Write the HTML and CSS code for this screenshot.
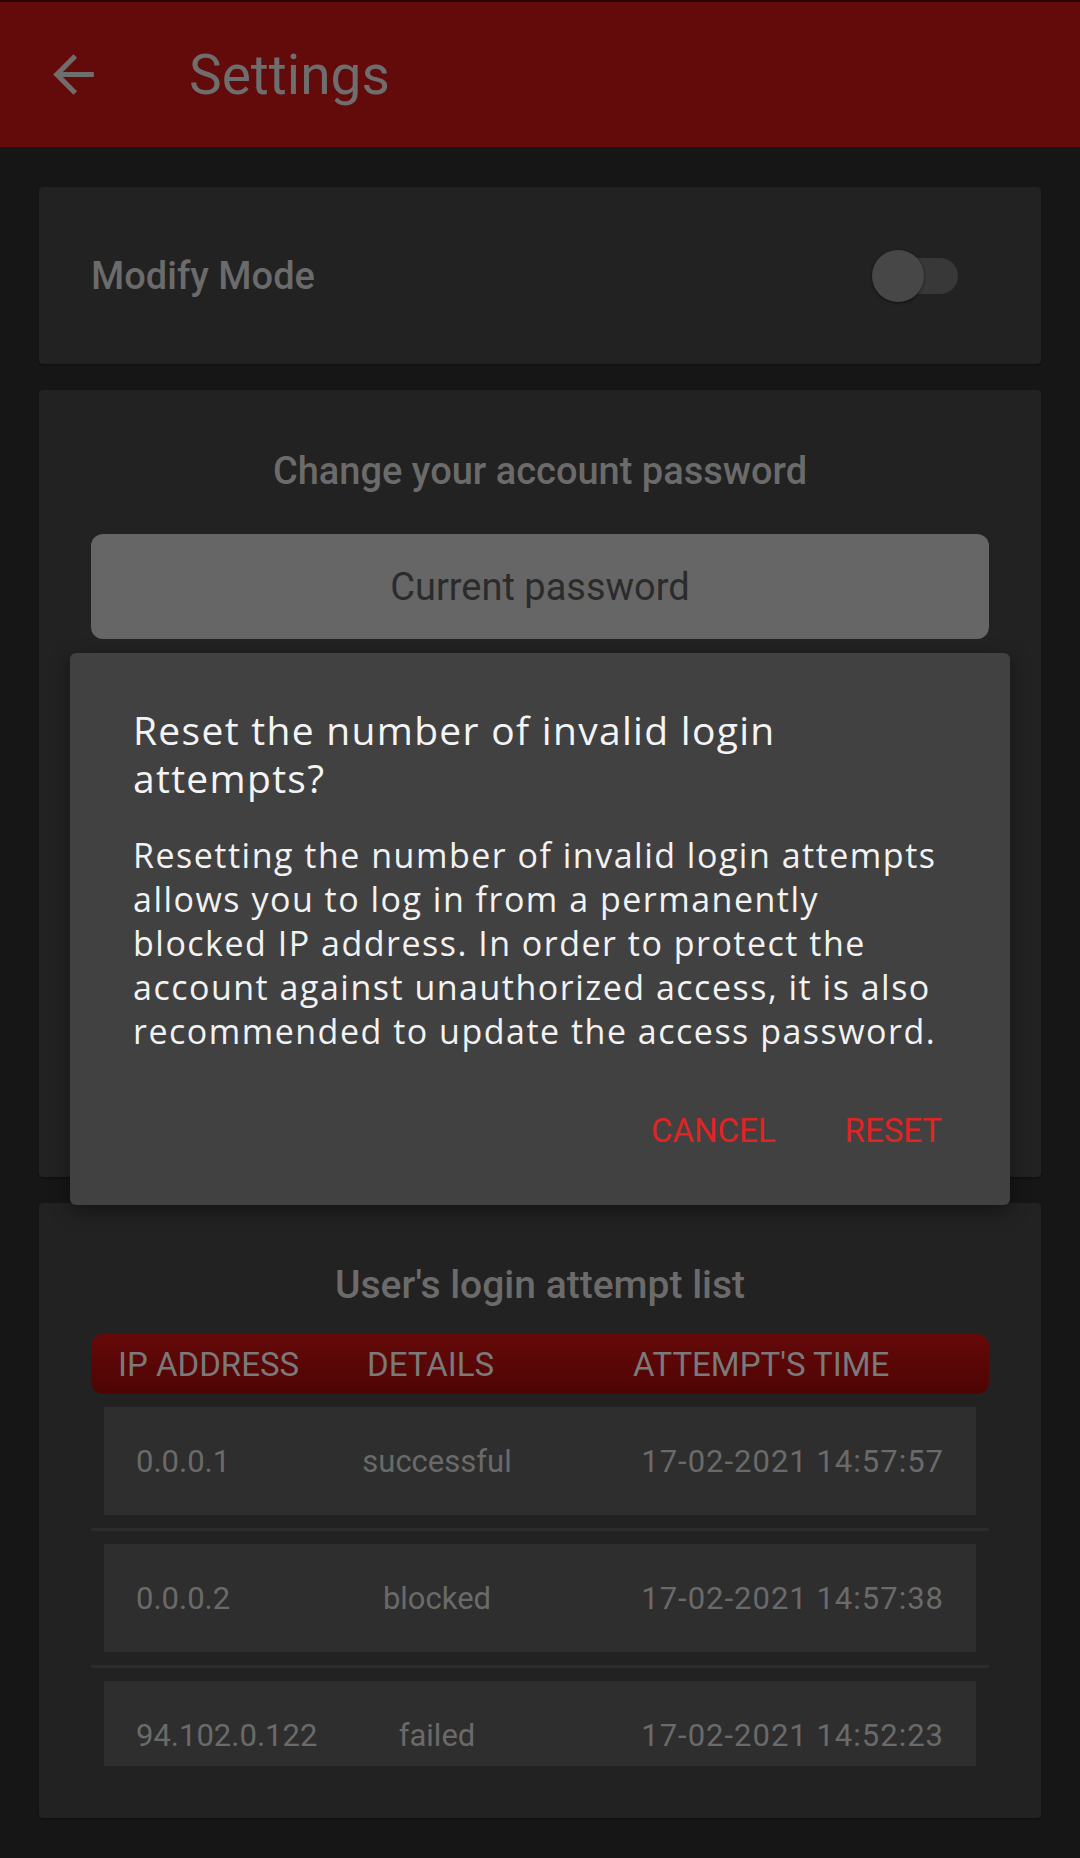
FILE: index.html
```html
<!DOCTYPE html>
<html lang="en">
<head>
<meta charset="utf-8">
<title>Settings</title>
<link rel="stylesheet" href="styles.css">
</head>
<body>
<header class="appbar">
  <svg class="back" viewBox="0 0 24 24" width="61" height="61" aria-hidden="true"><path d="M20 11H7.83l5.59-5.59L12 4l-8 8 8 8 1.41-1.41L7.83 13H20v-2z" fill="#6e6e6e"/></svg>
  <h1 class="title">Settings</h1>
</header>
<main class="content">
  <section class="card card-mode">
    <span class="mode-label">Modify Mode</span>
    <span class="switch"><span class="switch-track"></span><span class="switch-thumb"></span></span>
  </section>
  <section class="card card-password">
    <h2 class="card-title">Change your account password</h2>
    <div class="field">Current password</div>
  </section>
  <section class="card card-attempts">
    <h2 class="card-title list-title">User's login attempt list</h2>
    <div class="table-head">
      <span>IP ADDRESS</span>
      <span>DETAILS</span>
      <span>ATTEMPT'S TIME</span>
    </div>
    <div class="list">
      <div class="row"><span class="c-ip">0.0.0.1</span><span class="c-det">successful</span><span class="c-time">17-02-2021 14:57:57</span></div>
      <div class="sep"></div>
      <div class="row"><span class="c-ip">0.0.0.2</span><span class="c-det">blocked</span><span class="c-time">17-02-2021 14:57:38</span></div>
      <div class="sep"></div>
      <div class="row"><span class="c-ip">94.102.0.122</span><span class="c-det">failed</span><span class="c-time">17-02-2021 14:52:23</span></div>
    </div>
  </section>
</main>
<div class="dialog" role="dialog">
  <h3 class="dialog-title">Reset the number of invalid login<br>attempts?</h3>
  <p class="dialog-text">Resetting the number of invalid login attempts<br>allows you to log in from a permanently<br>blocked IP address. In order to protect the<br>account against unauthorized access, it is also<br>recommended to update the access password.</p>
  <div class="dialog-actions">
    <span class="btn">CANCEL</span>
    <span class="btn">RESET</span>
  </div>
</div>
</body>
</html>
```
FILE: styles.css
```css
* { box-sizing: border-box; }
html, body { margin: 0; padding: 0; }
body {
  width: 1080px;
  height: 1858px;
  overflow: hidden;
  position: relative;
  background: #161616;
  font-family: Roboto, "Noto Sans", sans-serif;
}
.appbar {
  height: 147px;
  background: #630a0a;
  border-top: 2px solid #2a0505;
  display: flex;
  align-items: center;
  padding-left: 43px;
}
.back { display: block; flex: none; }
.title {
  margin: 0 0 0 85px;
  font-size: 55px;
  font-weight: 400;
  color: #6e6e6e;
  line-height: 60px;
}
.content {
  padding: 40px 39px 40px 39px;
  display: flex;
  flex-direction: column;
  gap: 26px;
}
.card {
  background: #222222;
  border-radius: 4px;
  box-shadow: 0 1px 2px rgba(0,0,0,0.35);
}
.card-mode {
  height: 177px;
  display: flex;
  align-items: center;
  justify-content: space-between;
  padding: 0 83px 0 52px;
}
.mode-label {
  font-size: 38px;
  font-weight: 500;
  color: #6b6b6b;
}
.switch {
  position: relative;
  width: 86px;
  height: 52px;
  display: block;
}
.switch-track {
  position: absolute;
  right: 0;
  top: 8px;
  width: 76px;
  height: 36px;
  border-radius: 18px;
  background: #383838;
}
.switch-thumb {
  position: absolute;
  left: 0;
  top: 0;
  width: 52px;
  height: 52px;
  border-radius: 50%;
  background: #474747;
  box-shadow: 0 1px 3px rgba(0,0,0,0.55);
}
.card-password {
  height: 787px;
  padding: 58px 52px 0;
}
.card-title {
  margin: 0;
  text-align: center;
  font-size: 38px;
  font-weight: 500;
  line-height: 46px;
  color: #6b6b6b;
}
.field {
  margin-top: 40px;
  height: 105px;
  border-radius: 12px;
  background: #666666;
  display: flex;
  align-items: center;
  justify-content: center;
  font-size: 38px;
  color: #2b2b2b;
}
.card-attempts {
  height: 615px;
  padding: 60px 52px 0;
}
.list-title {
  font-size: 39px;
  line-height: 44px;
}
.table-head {
  margin-top: 27px;
  height: 60px;
  border-radius: 12px;
  background: linear-gradient(#650909, #4e0404);
  display: grid;
  grid-template-columns: 249px 266px 1fr;
  align-items: center;
  padding-left: 27px;
  font-size: 33px;
  color: #7a7a7a;
}
.list {
  margin-top: 13px;
  height: 359px;
  overflow: hidden;
  display: flex;
  flex-direction: column;
  gap: 13px;
}
.row {
  flex: none;
  height: 108px;
  margin: 0 13px;
  background: #2e2e2e;
  display: grid;
  grid-template-columns: 240px 186px 1fr;
  align-items: center;
  font-size: 31px;
  color: #6a6a6a;
}
.c-ip { padding-left: 32px; }
.c-det { text-align: center; }
.c-time { text-align: right; padding-right: 32px; letter-spacing: 1px; }
.sep {
  flex: none;
  height: 3px;
  background: #2c2c2c;
}
.dialog {
  position: absolute;
  left: 70px;
  top: 653px;
  width: 940px;
  height: 552px;
  background: #414141;
  border-radius: 6px;
  padding: 53px 63px 0 63px;
  box-shadow: 0 6px 20px rgba(0,0,0,0.4);
}
.dialog-title {
  margin: 0;
  font-family: "Open Sans", "Noto Sans", sans-serif;
  font-size: 39px;
  font-weight: 400;
  line-height: 48px;
  letter-spacing: 1.3px;
  color: #f4f4f4;
}
.dialog-text {
  margin: 31px 0 0;
  font-family: "Open Sans", "Noto Sans", sans-serif;
  font-size: 34px;
  line-height: 44px;
  letter-spacing: 1.5px;
  color: #f2f2f2;
}
.dialog-actions {
  margin-top: 56px;
  display: flex;
  justify-content: flex-end;
  gap: 69px;
  padding-right: 5px;
}
.btn {
  font-size: 33px;
  line-height: 44px;
  color: #e02424;
}
```
